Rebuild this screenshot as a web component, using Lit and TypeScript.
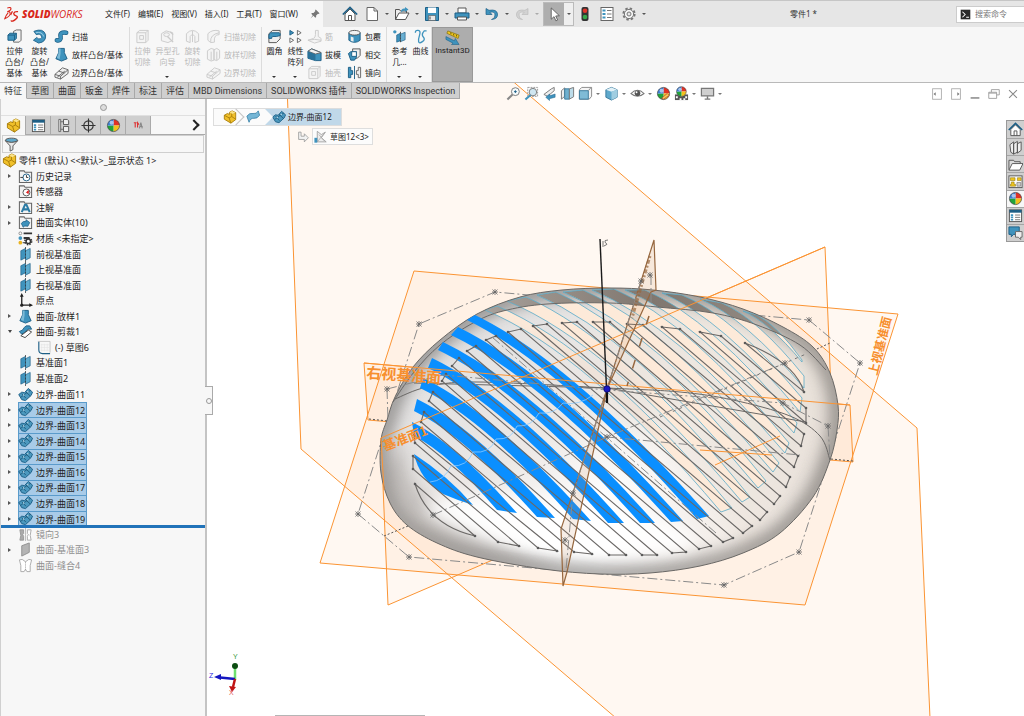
import { LitElement, html, svg, css, TemplateResult, SVGTemplateResult } from "lit";
import { customElement, state } from "lit/decorators.js";
import { classMap } from "lit/directives/class-map.js";

type Pt = [number, number];

const steel = "#3f93bd";
const deep = "#1d5f86";

const sphere = svg`
  <circle cx="8" cy="8" r="6.5" fill="#fff"/>
  <path d="M8 8V1.500A6.500 6.500 0 0 1 14.500 8Z" fill="#e03226"/>
  <path d="M8 8H14.500A6.500 6.500 0 0 1 8 14.500Z" fill="#f3c21c"/>
  <path d="M8 8V14.500A6.500 6.500 0 0 1 1.500 8Z" fill="#22a43a"/>
  <path d="M8 8H1.500A6.500 6.500 0 0 1 8 1.500Z" fill="#3c7fd6"/>
  <circle cx="6" cy="5" r="2.200" fill="#fff" opacity=".55"/>
  <circle cx="8" cy="8" r="6.500" fill="none" stroke="#3a3a3a" stroke-width=".7"/>`;

const folder = svg`<path d="M1.500 3.500V2h5l1 1.500h7v11h-13Z" fill="#f2f2f2" stroke="#666" stroke-width="1.100"/>`;

const ICONS: Record<string, SVGTemplateResult> = {
  home: svg`<path d="M3 8v6.500h10V8L8 3Z" fill="#fff" stroke="#555"/><path d="M.8 8.500 8 1.500l7.200 7" fill="none" stroke="${deep}" stroke-width="1.700"/><path d="M6.500 14.500V9.500h3v5" fill="none" stroke="#555"/>`,
  doc: svg`<path d="M3 1.500h7l3.500 3.500v9.500H3Z" fill="#fff" stroke="#666"/><path d="M10 1.500V5h3.500" fill="none" stroke="#666"/>`,
  open: svg`<path d="M1.500 13.500v-10h4l1 1.500h6v2" fill="#eee" stroke="#555"/><path d="M1.500 13.500 5 7h10l-3.500 6.500Z" fill="#fff" stroke="#555"/><path d="M7 6.500q0-4.500 4-4V1l3.500 2.500L11 6V4.500q-2.500 0-4 2Z" fill="${steel}"/>`,
  save: svg`<path d="M1.500 1.500h13v13h-13Z" fill="${steel}" stroke="${deep}"/><path d="M4 1.500h8v5.500H4Z" fill="#fff"/><path d="M4.500 9.500h7v5h-7Z" fill="#e8e8e8" stroke="#555" stroke-width=".6"/><path d="M6 10.500v3" stroke="#444"/>`,
  print: svg`<path d="M4 2h8v5H4Z" fill="#fff" stroke="#555"/><path d="M1 7h14v5H1Z" fill="${steel}" stroke="${deep}"/><path d="M3.500 11h9v3h-9Z" fill="#fff" stroke="#555"/>`,
  undo: svg`<path d="M2 2.500v6h6L5.800 6.300Q11 5 11 9t-3.500 4.500Q14 13 13.500 8T5 4.300Z" fill="${steel}" stroke="${deep}" stroke-width=".7"/>`,
  redo: svg`<path d="M14 2.500v6H8l2.200-2.200Q5 5 5 9t3.500 4.500Q2 13 2.500 8T11 4.300Z" fill="#d2d2d2" stroke="#bcbcbc" stroke-width=".7"/>`,
  cursor: svg`<path d="M4.500 1v12l3-2.700 2 4.500 1.800-.9-2-4.300 3.900-.3Z" fill="#fff" stroke="#555" stroke-width=".9"/>`,
  lights: svg`<rect x="4.500" y="1" width="7" height="14" rx="2" fill="#333"/><circle cx="8" cy="4.700" r="2.300" fill="#e0352b"/><circle cx="8" cy="11" r="2.300" fill="#37a84a"/>`,
  options: svg`<rect x="2" y="1.500" width="12" height="13" fill="#fff" stroke="#666"/><path d="M3.500 4.500h3M3.500 8h3M3.500 11.500h3" stroke="${steel}" stroke-width="2"/><path d="M8 4.500h4.500M8 8h4.500M8 11.500h4.500" stroke="#777"/>`,
  gear: svg`<circle cx="8" cy="8" r="5.600" fill="none" stroke="#777" stroke-width="2" stroke-dasharray="2.400 2"/><circle cx="8" cy="8" r="4.600" fill="#f5f5f5" stroke="#777"/><circle cx="8" cy="8" r="2" fill="#e6e6e6" stroke="#777"/>`,
  pin: svg`<path d="m9 2 5 5-1 1-1-.4L9.500 10v2L8.500 13 5.800 10.200 2 14l3-4.500L3 7.500l1-1h2L8.500 4 8 3Z" fill="#777"/>`,
  extrude: svg`<path d="M7 2.500 10 1h5v11l-2 2H7Z" fill="#f0f0f0" stroke="#666"/><path d="M1 6.500 3 4.500h7V10l-2 2H1Z" fill="${steel}" stroke="${deep}"/><path d="M1 6.500h7V12M8 6.500l2-2" fill="none" stroke="${deep}"/>`,
  revolve: svg`<path d="M2 2.500Q12-1.500 14.500 6 15.500 14 7 15L1.500 12 5 9q1.500 2 4 1.500 2-1 1-3Q9 4.500 4.500 6Z" fill="${steel}" stroke="${deep}" stroke-width=".9"/><path d="M4 4q7-1.500 8.500 4" fill="none" stroke="#a5d3e8"/>`,
  sweep: svg`<path d="M3 12q5 1 4-4t6-4" fill="none" stroke="${deep}" stroke-width="4.800" stroke-linecap="round"/><path d="M3 12q5 1 4-4t6-4" fill="none" stroke="${steel}" stroke-width="3.200" stroke-linecap="round"/>`,
  loft: svg`<path d="M5 1.500h6V6l3 6.500-6 2.500-6-2.500L5 6Z" fill="${steel}" stroke="${deep}"/><path d="M5 1.500h2V7l-1 6-3-1.500L5 6Z" fill="#7dbbd8"/>`,
  bound: svg`<path d="M1 10 9 3l6 2v4l-8 6-6-2Z" fill="#eee" stroke="#666"/><path d="m1 10 6 2 8-7M7 12v3M5 6.500l6 2M3.500 13l8-6.500" fill="none" stroke="#666"/>`,
  cutBox: svg`<path d="M2 4 5 1.500h9V12l-2.500 2.500H2Z" fill="#eee" stroke="#666"/><path d="M2 4h9.500v10.500M11.500 4 14 1.500M5 7h4v4H5Z" fill="none" stroke="#666"/>`,
  loftCut: svg`<path d="m1.500 4 4-2.500 3 1V14l-3 1-4-2ZM8.500 3l3-1.500 3 2V12l-3 2.500-3-1Z" fill="#eee" stroke="#666"/><path d="M5.500 5v9.500M11.500 5v9" stroke="#666"/>`,
  hole: svg`<path d="m1.500 5 5-3 7 2v8l-5 2.500-7-2Z" fill="#eee" stroke="#666"/><ellipse cx="7" cy="6" rx="3" ry="2" fill="none" stroke="#666"/><path d="m8 8 6 6M11 3l3 3" stroke="#666" stroke-width="1.500"/>`,
  revCut: svg`<path d="M1.500 5Q8-2 14.500 5v8l-4 1.500V8Q8 4 5.500 8v6.500l-4-1.500Z" fill="#eee" stroke="#666"/><path d="M8 2v12" stroke="#666"/>`,
  sweepCut: svg`<path d="M2 5q5-5 12-3v4q-6 0-5 8l-4 .5L2 12Z" fill="#eee" stroke="#666"/><path d="M5 14Q4 6 14 4" fill="none" stroke="#666"/>`,
  fillet: svg`<path d="M2 5 6 1.500h8v9L10 14.500H2Z" fill="#eee" stroke="#555"/><path d="M2 7q0-2 2-3h9l1 1v2l-4 1H6Q5 8 5 10H2Z" fill="${steel}" stroke="${deep}"/>`,
  pattern: svg`<path d="M2 1.500 6 4 2 6.500Z" fill="${steel}" stroke="${deep}"/><path d="M10 1.500 14 4l-4 2.500ZM2 9.500 6 12l-4 2.500ZM10 9.500l4 2.500-4 2.500Z" fill="#fff" stroke="#666"/>`,
  rib: svg`<path d="M9 1.500h3V8l3 2v3l-7 2-7-3 6-2q2-1 2-4Z" fill="#eee" stroke="#666"/><path d="m1 12 7-1 7 1" fill="none" stroke="#666"/>`,
  draft: svg`<path d="M1 4.500 5 2l10 4v8.500H9L1 12Z" fill="${steel}" stroke="${deep}"/><path d="M1 4.500 5 2l10 4-6 1.500Z" fill="#f2f2f2" stroke="#666"/><path d="M1 4.500 9 8v6.500L1 12Z" fill="#2a7199"/>`,
  wrap: svg`<path d="M2 4v8q6 4.500 12 0V4Z" fill="${steel}" stroke="${deep}"/><ellipse cx="8" cy="4" rx="6" ry="2.500" fill="#f2f2f2" stroke="#555"/><path d="M4 8v4.500l3 1V9Z" fill="#eee"/>`,
  intersect: svg`<path d="M6 2h8v7l-3 3H6Z" fill="#eee" stroke="#555"/><path d="M1.500 7 4 5h6v6l-2 3H4Z" fill="${steel}" stroke="${deep}"/><path d="M5 5h5v5H5Z" fill="#fff" stroke="${deep}"/>`,
  mirror: svg`<path d="M1.500 2.500H4V6h2v4H4v3.500H1.500Z" fill="${steel}" stroke="${deep}"/><path d="M14.500 2.500H12V6h-2v4h2v3.500h2.500Z" fill="#eee" stroke="#666"/><path d="M8 1v14" stroke="${deep}"/>`,
  refgeo: svg`<circle cx="3" cy="3" r="1.800" fill="${steel}"/><path d="M5 6.500 9 4.500v8L5 14Z" fill="${steel}" stroke="${deep}" stroke-width=".7"/><path d="m9 5.500 5-2v8l-5 2Z" fill="#6bb0d2" stroke="${deep}" stroke-width=".7"/><path d="M9 3v12" stroke="#444" stroke-dasharray="2 1"/>`,
  curve: svg`<path d="M2.500 4q0-3 3-2.500t1.500 5-1 7 4 0 1-5 1-6.500h2.500" fill="none" stroke="${steel}" stroke-width="1.400"/>`,
  instant: svg`<path d="m2 3.500 1-2.500 12 4.500-1 3.500Z" fill="#f2c81e" stroke="#8a7410" stroke-width=".8"/><path d="m6 2.500.5 2M9 4l.5 2M12 5l.5 2" stroke="#6b5a0a"/><path d="m1 7 9 4.500L11 9l4 6.500H7L8.500 14 1 10Z" fill="${steel}" stroke="${deep}" stroke-width=".6"/>`,
  part: svg`<path d="M1.500 6 5 4l2.500 1V2.500l3-1.500 4 2v8L9 15l-7.500-4.500Z" fill="#f0c02a" stroke="#a87d0a"/><path d="m1.500 6 5.500 3 3-1.500V4l4.500-1M7 9l2 6M10 7.500l4.500 3" fill="none" stroke="#a87d0a"/><path d="M7.500 2.500 10.500 1l4 2L11 4.500Z" fill="#fbe38a"/>`,
  props: svg`<rect x="1.500" y="2" width="13" height="12.500" fill="#fff" stroke="#555"/><path d="M1.500 2h13v3h-13Z" fill="${deep}"/><path d="M3 7.500h2.500M3 10h2.500M3 12.500h2.500" stroke="${steel}" stroke-width="1.800"/><path d="M7.500 7.500H13M7.500 10H13M7.500 12.500H13" stroke="#777"/>`,
  config: svg`<path d="M3 1.500h2v13H3ZM5 4h3M5 12h3" fill="#eee" stroke="#666"/><path d="M8 1.500h4l1.500 1.500v4H8ZM8 9h5.500v5.500H8Z" fill="#eee" stroke="#555"/>`,
  target: svg`<circle cx="8" cy="8" r="5" fill="none" stroke="#333" stroke-width="1.200"/><path d="M8 .5v15M.5 8h15" stroke="#333" stroke-width="1.200"/>`,
  sphere,
  cam: svg`<path d="M3 5h3M4.500 5v5M7 10V5l1.500 2" fill="none" stroke="#d33" stroke-width="1.200"/><path d="M9 11l1.500-6L12 11M9.500 9h3" fill="none" stroke="#888" stroke-width="1.200"/>`,
  filter: svg`<ellipse cx="8" cy="3.500" rx="6.500" ry="2.300" fill="#5fa9cc" stroke="#555"/><path d="m1.500 4 5 5.500v5.500l3-1.500v-4l5-5.500Q8 7.500 1.500 4Z" fill="#e9e9e9" stroke="#555"/>`,
  history: svg`${folder}<circle cx="9" cy="9" r="3.700" fill="#fff" stroke="${deep}"/><path d="M9 6.500V9h2M2.500 9h3" stroke="#333" fill="none"/>`,
  sensor: svg`${folder}<circle cx="9" cy="9" r="3.700" fill="#fff" stroke="#555"/><path d="m9 9 2-2v3Z" fill="#d22" stroke="#d22"/>`,
  note: svg`${folder}<path d="M4 13 7.500 5h1.500L12.500 13M5.500 10h5.500" fill="none" stroke="#2b7ba5" stroke-width="2.200"/>`,
  bodies: svg`${folder}<path d="M3.500 9q2-3 5-2V5l4 3-2 4q-4-1-5 1Z" fill="${steel}" stroke="${deep}" stroke-width=".8"/>`,
  material: svg`<circle cx="2.500" cy="2.500" r="1.500" fill="#fff" stroke="#666" stroke-width=".7"/><circle cx="2.500" cy="7.500" r="2" fill="${steel}"/><circle cx="2.500" cy="12.500" r="2" fill="#e9b320"/><path d="M6 2.500h9M6 7.500h6" stroke="#333" stroke-width="2"/><circle cx="11" cy="11" r="3.600" fill="none" stroke="#333" stroke-width="1.600" stroke-dasharray="1.600 1.200"/><circle cx="11" cy="11" r="2.400" fill="#fff" stroke="#333" stroke-width="1.600"/><path d="M5 12.500h3" stroke="#333"/>`,
  plane: svg`<path d="m3 4 5-2.500v10L3 14Z" fill="${steel}" stroke="${deep}" stroke-width=".7"/><path d="m8 4 5-2.500v10L8 14Z" fill="#5faccf" stroke="${deep}" stroke-width=".7"/><path d="M8 0v16" stroke="#333" stroke-width=".8" stroke-dasharray="2 1.500"/>`,
  origin: svg`<path d="M4 2v11h10" fill="none" stroke="#222" stroke-width="1.400"/><path d="m4 0 2 4H2ZM16 13l-4-2v4Z" fill="#222"/><circle cx="4" cy="13" r="1.700" fill="#222"/>`,
  trim: svg`<path d="M1.500 8q4-1 5-4t6-2l2 3.500q-4-1-6 2t-5 3Z" fill="${steel}" stroke="${deep}"/><path d="m3 12.500 8-6 3.500 2-7 6Z" fill="#fff" stroke="#444"/>`,
  sketch: svg`<path d="M3 1.500v9q0 4 4 4h8" fill="none" stroke="${deep}" stroke-width="1.200"/><path d="M2 1.500h13v12" fill="none" stroke="#bbb" stroke-width=".8"/><path d="M6 4v8M9 4v8M12 4v8M5 5h9M5 8h9M5 11h9" stroke="#e2e2e2" stroke-width=".6"/>`,
  surf: svg`<path d="M.8 8 4 5.500 7 6l4-4.500 4.500 4L14 9l-6 5.500-4-1Z" fill="#4b98be" stroke="${deep}"/><path d="m4 7 4.500 5M8 5l5 4.500M3 11l7-5.500 3.500-2" fill="none" stroke="#174e6e" stroke-width=".8"/><circle cx="6" cy="8.500" r=".8" fill="#cfe8f4"/><circle cx="10.500" cy="5" r=".8" fill="#cfe8f4"/>`,
  mirrorOff: svg`<path d="M2 3h4v4l-1 1 1 2v4H2l1-5Z" fill="#aaa" stroke="#999"/><path d="M14 3h-4v4l1 1-1 2v4h4l-1-5Z" fill="#fff" stroke="#aaa"/><path d="M8 1v14" stroke="#bbb"/>`,
  planeOff: svg`<path d="m4 4 8-3v10l-8 4Z" fill="#b4b4b4" stroke="#8f8f8f"/>`,
  knit: svg`<path d="m1.500 2 3-.5L8 4l3.500-2.500 3 .5L13 8v6.500H9.500L8 12l-1.500 2.500H3V8Z" fill="#fff" stroke="#aaa"/><path d="M8 4v9" stroke="#999" stroke-dasharray="1 1"/>`,
  zoomFit: svg`<circle cx="10" cy="6" r="4.200" fill="#f5fafc" stroke="#777"/><path d="m7 9-5.500 5.500" stroke="#888" stroke-width="2.200"/><path d="M8.500 6h3M10 4.500v3" stroke="${deep}"/>`,
  zoomArea: svg`<path d="M4 1.500h10.500V11H4Z" fill="none" stroke="#999" stroke-dasharray="2 1"/><circle cx="9.500" cy="6.500" r="4" fill="#cfe6f1" stroke="#777"/><path d="m7 9.500-5.500 5" stroke="${steel}" stroke-width="2.200"/>`,
  prev: svg`<path d="m2 9 8-6 3-1.500V5L6 11Z" fill="#eee" stroke="#777"/><path d="m4 12 4-3.500v2l6-2V12l-6 1.500v2Z" fill="${steel}" stroke="${deep}" stroke-width=".5"/>`,
  section: svg`<path d="M1.500 5 5 2v9l-3.500 3Z" fill="#eee" stroke="#777"/><path d="M5 3h5v11H5Z" fill="#6fb0cf" stroke="#3a7a9c"/><path d="m10 3 4.500-1.500v10L10 14Z" fill="#bcdcea" stroke="#777"/>`,
  orient: svg`<path d="M4 1.500h10.500V11L12 14H1.500V4Z" fill="#f5f5f5" stroke="#888"/><path d="M1.500 5H11v9H1.500Z" fill="#7fbbd6" stroke="#3a7a9c"/><path d="M11 5l3-3.500" stroke="#888"/>`,
  style: svg`<path d="m2 4 6-2.500L14 4v8l-6 3-6-3Z" fill="#5fa9cc" stroke="#3a7a9c"/><path d="m2 4 6-2.500L14 4 8 6Z" fill="#e2f1f7"/><path d="M8 6v9l6-3V4Z" fill="#9fcde1"/>`,
  eye: svg`<path d="M1 8q7-7 14 0-7 6-14 0Z" fill="#fff" stroke="#777" stroke-width="1.100"/><circle cx="8" cy="7.700" r="3" fill="#555"/><circle cx="7" cy="6.700" r="1" fill="#fff"/>`,
  appear: svg`${sphere}<path d="m6 13 6-5 2 2-6 4Z" fill="#f3d35a" stroke="#b33" stroke-width=".7"/>`,
  scene: svg`<path d="M1 9h14v6H1Z" fill="#555"/><path d="M2 11h2v2H2ZM6 13h2v2H6ZM12 11h2v2h-2ZM10 13h2v2h-2Z" fill="#fff"/><g transform="translate(1.500 -.5) scale(.8)">${sphere}</g>`,
  monitor: svg`<path d="M1.500 2.500h13v8h-13Z" fill="#cfcfcf" stroke="#777" stroke-width="1.300"/><path d="M8 11v3M5 14h6" stroke="#777" stroke-width="1.500"/>`,
  dockL: svg`<rect x="3" y="2" width="10" height="12" fill="#fff" stroke="#aaa"/><path d="M6.500 6v4L4 8Z" fill="#777"/>`,
  dockR: svg`<rect x="3" y="2" width="10" height="12" fill="#fff" stroke="#aaa"/><path d="M9.500 6v4L12 8Z" fill="#777"/>`,
  min: svg`<path d="M3 12.500h10" stroke="#999" stroke-width="2"/>`,
  restore: svg`<path d="M5 6V3h9v6h-3M2 6h9v7H2Z" fill="none" stroke="#999"/><path d="M2 7h9" stroke="#999"/>`,
  close: svg`<path d="m3.500 3.500 9 9M12.500 3.500l-9 9" stroke="#888" stroke-width="1.200"/>`,
  library: svg`<path d="m2 5 4-3v9.500L6 15l-3-2ZM6 4l4-2.500V13l-4 2ZM10 4l4-2v9l-4 3Z" fill="#eee" stroke="#555"/>`,
  folderBig: svg`<path d="M1 13.500v-10h5l1 1.500h6v2" fill="#ddd" stroke="#555"/><path d="m1 14 3.500-7H16l-3.500 7Z" fill="#fff" stroke="#555"/>`,
  palette: svg`<rect x="1" y="2" width="14" height="12.500" fill="#fff" stroke="#555"/><path d="M2.500 4h5v3h-5ZM10 4h4v3h-4ZM3.500 8.500h3V11H8v2H2.500v-2h1Z" fill="#f0c51c" stroke="#8a7410" stroke-width=".6"/><path d="M9.500 9h4v4h-4Z" fill="#ccc" stroke="#666" stroke-width=".6"/>`,
  forum: svg`<path d="M1 2h11v8H6l-2.500 2.500V10H1Z" fill="${steel}" stroke="${deep}"/><path d="M8 7h7v6h-1.500v2.500L11 13H8Z" fill="#eee" stroke="#666"/>`,
  prompt: svg`<rect x="1" y="1" width="14" height="14" fill="#2a2a2a"/><path d="m3.500 4 4 4-4 4M9 12h4" fill="none" stroke="#fff" stroke-width="1.500"/>`,
  child: svg`<path d="M2 2h3v5h4V4l5 5-5 5v-3H2Z" fill="#f2f2f2" stroke="#999"/>`,
  patch: svg`<path d="M1 7q3-4 7-3t6-3l1.500 5Q13 10 9 9.500T3.500 14Z" fill="#74b6d6" stroke="#3f86ab"/>`,
  sketchSurf: svg`<path d="M4 1v13h11L9 9l5-7-5 3Z" fill="#eee" stroke="#999"/><path d="M4 14 13 3M6 5l7 8" stroke="#aaa"/><path d="M.5 9H4v6H.5Z" fill="${steel}"/>`,
};

const icon = (name: string): TemplateResult =>
  html`<svg class="icon" viewBox="0 0 16 16" aria-hidden="true">${ICONS[name]}</svg>`;

const iconCss = css`
  .icon { width: 15px; height: 15px; flex: none; display: block; }
  button { font: inherit; color: inherit; background: none; border: 0; padding: 0; margin: 0; }
  * { box-sizing: border-box; }
`;

/* ---------- title bar ---------- */

@customElement("title-bar")
class TitleBar extends LitElement {
  static styles = [iconCss, css`
    :host { display: flex; height: 27px; background: #e6e6e6; border-top: 1px solid #c6c6c6; align-items: stretch; font-size: 8px; line-height: 12px; color: #222; }
    .brand { display: flex; align-items: center; width: 323px; background: #f7f7f7; padding-left: 4px; }
    .mark { width: 15px; height: 16px; }
    .name { margin-left: 3px; font: italic 800 10px/12px "Open Sans", sans-serif; color: #d9271c; width: 83px; white-space: nowrap; }
    .name span { font-weight: 400; }
    nav { display: flex; gap: 8px; flex: 1; }
    nav button { white-space: nowrap; }
    .pin { margin-right: 2px; }
    .pin .icon { width: 12px; height: 12px; }
    .quick { display: flex; align-items: center; padding-left: 19px; }
    .cell { display: flex; align-items: center; width: 30px; }
    .cell.solo { width: 22px; }
    .cell .icon { width: 16px; height: 16px; }
    .drop { width: 14px; display: grid; place-items: center; }
    .drop::before { content: ""; border: 2px solid transparent; border-top-color: #555; border-bottom: 0; }
    .faded .drop::before { border-top-color: #aaa; }
    .select { display: flex; align-self: stretch; margin: 1px 3px 1px -1px; border: 1px solid #bbb; }
    .select .hot { width: 20px; background: #aeaeae; display: grid; place-items: center; }
    .select .drop { width: 9px; background: #efefef; }
    .title { flex: 1; text-align: center; align-self: center; color: #333; }
    .search { display: flex; align-items: center; gap: 4px; background: #fff; border: 1px solid #ccc; border-right: 0; align-self: center; height: 17px; width: 68px; padding-left: 3px; }
    .search .icon { width: 11px; height: 11px; }
    .search input { width: 48px; border: 0; padding: 0; outline: 0; font: inherit; background: none; }
    .search input::placeholder { color: #777; }
  `];
  render() {
    const menus = ["文件(F)", "编辑(E)", "视图(V)", "插入(I)", "工具(T)", "窗口(W)"];
    const drops = ["doc", "open", "save", "print", "undo", "redo"];
    return html`
      <div class="brand">
        <svg class="mark" viewBox="0 0 16 16" aria-hidden="true">
          <path d="M3.500 1.500q4-1 4 .8T3.500 5.500q3.500-.5 3 2.500T.8 13q1.500-4 3.700-6.500" fill="none" stroke="#d9271c" stroke-width="1.100"/>
          <path d="M15 5.500q-4-.5-4.500 1.500t2.500 3-1 4-4.500.8M9 5 7 9" fill="none" stroke="#d9271c" stroke-width="1.400"/>
        </svg>
        <div class="name">SOLID<span>WORKS</span></div>
        <nav>${menus.map((m) => html`<button>${m}</button>`)}</nav>
        <button class="pin" aria-label="固定">${icon("pin")}</button>
      </div>
      <div class="quick">
        <button class="cell solo" aria-label="主页">${icon("home")}</button>
        ${drops.map((d) => html`<button class=${classMap({ cell: true, faded: d === "redo" })} aria-label=${d}>${icon(d)}<span class="drop"></span></button>`)}
        <div class="select"><button class="hot" aria-label="选择">${icon("cursor")}</button><button class="drop" aria-label="选择选项"></button></div>
        <button class="cell solo" aria-label="重建">${icon("lights")}</button>
        <button class="cell solo" aria-label="属性">${icon("options")}</button>
        <button class="cell" aria-label="选项">${icon("gear")}<span class="drop"></span></button>
      </div>
      <div class="title">零件1 *</div>
      <label class="search">${icon("prompt")}<input type="text" placeholder="搜索命令" aria-label="搜索命令" /></label>`;
  }
}

/* ---------- command ribbon ---------- */

interface Big { icon: string; lines: string[]; drop?: boolean; off?: boolean }
interface Small { icon: string; text: string; off?: boolean }

@customElement("command-ribbon")
class CommandRibbon extends LitElement {
  static styles = [iconCss, css`
    :host { display: flex; height: 56px; background: #f7f7f7; border-bottom: 1px solid #b9b9b9; font-size: 8px; line-height: 11px; color: #222; }
    .group { display: flex; border-right: 1px solid #dcdcdc; }
    .first { padding-left: 2px; }
    .big { position: relative; width: 25px; display: flex; flex-direction: column; align-items: center; padding-top: 2px; white-space: nowrap; }
    .big .icon { margin-bottom: 1px; }
    .narrow .big { width: 21px; }
    .narrow { padding-left: 2px; }
    .big.drop::after { content: ""; border: 2px solid transparent; border-top-color: #333; border-bottom: 0; margin-top: auto; margin-bottom: 4px; }
    .stack { display: grid; grid-template-rows: repeat(3, 1fr); padding: 0 5px 0 1px; }
    .first .stack { padding-left: 2px; padding-right: 6px; }
    .small { display: flex; align-items: center; gap: 3px; white-space: nowrap; }
    .off { color: #b9b9b9; }
    .off .icon { filter: grayscale(1); opacity: .3; }
    .instant { width: 41px; background: #adadad; border: 1px solid #999; display: flex; flex-direction: column; align-items: center; padding-top: 2px; }
    .instant span { font-family: Roboto, sans-serif; }
  `];
  big = (b: Big) => html`<button class=${classMap({ big: true, drop: !!b.drop, off: !!b.off })}>${icon(b.icon)}${b.lines.map((l) => html`<span>${l}</span>`)}</button>`;
  small = (s: Small) => html`<button class=${classMap({ small: true, off: !!s.off })}>${icon(s.icon)}<span>${s.text}</span></button>`;
  render() {
    return html`
      <div class="group first">
        ${[{ icon: "extrude", lines: ["拉伸", "凸台/", "基体"] }, { icon: "revolve", lines: ["旋转", "凸台/", "基体"] }].map(this.big)}
        <div class="stack">${[{ icon: "sweep", text: "扫描" }, { icon: "loft", text: "放样凸台/基体" }, { icon: "bound", text: "边界凸台/基体" }].map(this.small)}</div>
      </div>
      <div class="group">
        ${[{ icon: "cutBox", lines: ["拉伸", "切除"], off: true }, { icon: "hole", lines: ["异型孔", "向导"], off: true, drop: true }, { icon: "revCut", lines: ["旋转", "切除"], off: true }].map(this.big)}
        <div class="stack">${[{ icon: "sweepCut", text: "扫描切除", off: true }, { icon: "loftCut", text: "放样切除", off: true }, { icon: "bound", text: "边界切除", off: true }].map(this.small)}</div>
      </div>
      <div class="group narrow">
        ${[{ icon: "fillet", lines: ["圆角"], drop: true }, { icon: "pattern", lines: ["线性", "阵列"], drop: true }].map(this.big)}
        <div class="stack">${[{ icon: "rib", text: "筋", off: true }, { icon: "draft", text: "拔模" }, { icon: "cutBox", text: "抽壳", off: true }].map(this.small)}</div>
        <div class="stack">${[{ icon: "wrap", text: "包覆" }, { icon: "intersect", text: "相交" }, { icon: "mirror", text: "镜向" }].map(this.small)}</div>
      </div>
      <div class="group narrow">
        ${[{ icon: "refgeo", lines: ["参考", "几..."], drop: true }, { icon: "curve", lines: ["曲线"], drop: true }].map(this.big)}
      </div>
      <button class="instant">${icon("instant")}<span>Instant3D</span></button>`;
  }
}

/* ---------- feature tree ---------- */

interface Row { icon: string; text: string; arrow?: "right" | "down"; kind?: "root" | "nested"; on?: boolean; off?: boolean; bar?: boolean }

const ROWS: Row[] = [
  { icon: "part", text: "零件1 (默认) <<默认>_显示状态 1>", kind: "root" },
  { icon: "history", text: "历史记录", arrow: "right" },
  { icon: "sensor", text: "传感器" },
  { icon: "note", text: "注解", arrow: "right" },
  { icon: "bodies", text: "曲面实体(10)", arrow: "right" },
  { icon: "material", text: "材质 <未指定>" },
  { icon: "plane", text: "前视基准面" },
  { icon: "plane", text: "上视基准面" },
  { icon: "plane", text: "右视基准面" },
  { icon: "origin", text: "原点" },
  { icon: "loft", text: "曲面-放样1", arrow: "right" },
  { icon: "trim", text: "曲面-剪裁1", arrow: "down" },
  { icon: "sketch", text: "(-) 草图6", kind: "nested" },
  { icon: "plane", text: "基准面1" },
  { icon: "plane", text: "基准面2" },
  { icon: "surf", text: "边界-曲面11", arrow: "right" },
  ...[12, 13, 14, 15, 16, 17, 18, 19].map((n): Row => ({ icon: "surf", text: `边界-曲面${n}`, arrow: "right", on: true })),
  { icon: "mirrorOff", text: "镜向3", off: true, bar: true },
  { icon: "planeOff", text: "曲面-基准面3", arrow: "right", off: true },
  { icon: "knit", text: "曲面-缝合4", off: true },
];

@customElement("feature-panel")
class FeaturePanel extends LitElement {
  static styles = [iconCss, css`
    :host { display: flex; flex-direction: column; position: relative; background: #f7f7f7; border-right: 2px solid #c4c4c4; border-left: 1px solid #d0d0d0; font-size: 9px; line-height: 13px; color: #222; padding-top: 16px; }
    .grip { height: 17px; display: grid; place-items: center; border-bottom: 1px solid #e0e0e0; }
    .grip::before { content: ""; width: 5px; height: 5px; border: 1px solid #999; border-radius: 50%; background: #ddd; }
    .tabs { display: flex; height: 19px; border-bottom: 1px solid #aaa; }
    .tabs button { width: 25px; background: #cfcfcf; border-right: 1px solid #aaa; display: grid; place-items: center; }
    .tabs button.on { background: #f7f7f7; margin-bottom: -1px; }
    .tabs .more { margin-left: auto; width: 18px; background: none; border: 0; }
    .more::before { content: ""; width: 6px; height: 6px; border: solid #222; border-width: 2px 2px 0 0; transform: rotate(45deg); margin-right: 4px; }
    .filter { display: flex; align-items: center; height: 18px; margin: 0 1px; border: 1px solid #cfcfcf; padding-left: 1px; }
    .filter input { flex: 1; border: 0; outline: 0; background: none; font: inherit; min-width: 0; }
    .tree { list-style: none; margin: 0; padding: 0; display: grid; grid-auto-rows: 1fr; height: 420px; }
    .tree li { position: relative; display: flex; align-items: stretch; }
    .exp { width: 17px; display: grid; place-items: center; }
    .exp.right::before { content: ""; border: 2px solid transparent; border-left: 3px solid #555; border-right: 0; }
    .exp.down::before { content: ""; border: 2px solid transparent; border-top: 3px solid #444; border-bottom: 0; }
    .label { display: flex; align-items: center; gap: 3px; padding-right: 1px; white-space: nowrap; }
    .root .label { gap: 2px; }
    .root { padding-left: 1px; }
    .nested { padding-left: 35px; }
    .nested .label { gap: 4px; }
    .on .label { background: #a8cbe8; border: 1px solid #5a9bcb; border-bottom-width: 0; padding-right: 1px; }
    .on .label .icon { margin: -1px 0 0 -1px; }
    .off { color: #8f8f8f; }
    .bar::before { content: ""; position: absolute; left: 0; right: 0; top: -1px; height: 3px; background: #2173b9; }
    .tree .icon { align-self: center; }
    .handle { position: absolute; left: 100%; top: 303px; width: 8px; height: 29px; background: #f7f7f7; border: 1px solid #aaa; border-left: 0; display: grid; place-items: center; z-index: 2; }
    .handle::before { content: ""; width: 4px; height: 4px; border: 1px solid #999; border-radius: 50%; }
  `];
  row(r: Row) {
    const cls = classMap({ on: !!r.on, off: !!r.off, bar: !!r.bar, root: r.kind === "root", nested: r.kind === "nested" });
    return html`<li class=${cls}>
      ${r.kind ? "" : r.arrow ? html`<button class="exp ${r.arrow}" aria-label="展开"></button>` : html`<span class="exp"></span>`}
      <span class="label">${icon(r.icon)}<span>${r.text}</span></span>
    </li>`;
  }
  render() {
    return html`
      <div class="grip"></div>
      <div class="tabs">
        ${["part", "props", "config", "target", "sphere", "cam"].map((t, i) => html`<button class=${i ? "" : "on"} aria-label=${t}>${icon(t)}</button>`)}
        <button class="more" aria-label="更多"></button>
      </div>
      <label class="filter">${icon("filter")}<input type="text" aria-label="过滤" /></label>
      <ul class="tree">${ROWS.map((r) => this.row(r))}</ul>
      <button class="handle" aria-label="折叠面板"></button>`;
  }
}

/* ---------- model scene ---------- */

const pts = (p: Pt[]) => p.map((q) => q.join(",")).join(" ");

/** Smooth path through the points (Catmull-Rom converted to cubic Béziers). */
function spline(p: Pt[], closed = false): string {
  const n = p.length;
  const at = (i: number) => (closed ? p[(i + n) % n] : p[Math.max(0, Math.min(n - 1, i))]);
  let d = `M${p[0]}`;
  for (let i = 0; i < (closed ? n : n - 1); i++) {
    const [a, b, c, e] = [at(i - 1), at(i), at(i + 1), at(i + 2)];
    d += `C${b[0] + (c[0] - a[0]) / 6},${b[1] + (c[1] - a[1]) / 6} ${c[0] - (e[0] - b[0]) / 6},${c[1] - (e[1] - b[1]) / 6} ${c[0]},${c[1]}`;
  }
  return d + (closed ? "Z" : "");
}

/** Curved band: low/high corner at the start, low/high corner at the end. */
function band(a: Pt, b: Pt, c: Pt, d: Pt, bulge: number): string {
  const ctl = (p: Pt, q: Pt): Pt => {
    const [dx, dy] = [q[0] - p[0], q[1] - p[1]];
    return [p[0] + dx * 0.34 + dy * bulge, p[1] + dy * 0.34 - dx * bulge];
  };
  return `M${a}L${b}Q${ctl(b, d)} ${d}L${c}Q${ctl(a, c)} ${a}Z`;
}

const OUTLINE: Pt[] = [
  [610, 288], [653, 290], [700, 297], [743, 309], [783, 327], [813, 347], [830, 373], [838, 405], [837, 430], [830, 460], [813, 497], [780, 533],
  [743, 553], [700, 566], [650, 573], [600, 574], [543, 569], [477, 557], [437, 543], [407, 525], [390, 503], [381, 473], [381, 440], [387, 420],
  [395, 397], [413, 367], [440, 340], [477, 314], [520, 297], [562, 290],
];
const RIM: Pt[] = [[393, 402], [414, 372], [440, 345], [473, 323], [503, 311], [547, 304], [610, 303], [657, 307], [713, 313], [757, 325], [800, 345], [826, 370]];

const BLUE: [Pt, Pt, Pt, Pt][] = [
  [[467, 320], [475, 315], [697, 519], [709, 516]],
  [[451, 335], [458, 327], [671, 522], [683, 521]],
  [[438, 350], [443, 342], [640, 523], [655, 523]],
  [[428, 368], [432, 358], [608, 523], [624, 523]],
  [[420, 388], [423, 378], [573, 519], [591, 521]],
  [[414, 411], [417, 399], [537, 517], [555, 518]],
  [[414, 436], [412, 422], [497, 510], [517, 513]],
];

const HOLES: [Pt, Pt, Pt, Pt][] = [
  [[485, 310], [497, 306], [721, 512], [732, 508]],
  [[507, 301], [526, 297], [742, 502], [750, 497]],
  [[537, 295], [556, 292], [758, 488], [766, 481]],
  [[563, 292], [583, 290], [773, 472], [779, 463]],
  [[592, 290], [614, 289], [785, 453], [789, 443]],
  [[625, 290], [645, 290], [794, 433], [797, 423]],
  [[662, 293], [682, 295], [800, 412], [802, 398]],
  [[700, 299], [722, 303], [804, 388], [804, 376]],
  [[743, 311], [757, 315], [802, 362], [802, 360]],
];

const SLOTS: [Pt, Pt, Pt, Pt][] = [
  [[413, 469], [413, 456], [498, 542], [519, 546]],
  [[415, 443], [414, 435], [538, 548], [557, 551]],
  [[421, 422], [424, 412], [574, 552], [592, 554]],
  [[429, 401], [433, 392], [609, 555], [626, 555]],
  [[442, 381], [446, 374], [642, 555], [657, 555]],
  [[452, 366], [459, 358], [672, 553], [686, 552]],
  [[467, 351], [476, 346], [699, 549], [711, 546]],
  [[486, 340], [496, 336], [723, 542], [733, 538]],
  [[508, 332], [521, 329], [743, 533], [752, 526]],
  [[533, 326], [547, 324], [760, 520], [767, 512]],
  [[562, 323], [577, 322], [774, 504], [780, 496]],
  [[593, 322], [610, 322], [786, 487], [790, 477]],
  [[627, 324], [643, 325], [794, 467], [798, 456]],
  [[662, 327], [680, 329], [801, 446], [804, 434]],
  [[700, 332], [721, 336], [806, 423], [806, 408]],
];

const HULL: Pt[] = [[358, 514], [409, 557], [724, 585], [799, 552], [860, 363], [809, 320], [495, 292], [419, 324]];
const STARS: Pt[] = [...HULL, [387, 389], [828, 426], [650, 275], [641, 281], [565, 540], [573, 493], [607, 437], [433, 515], [785, 363], [783, 403]];

@customElement("model-scene")
class ModelScene extends LitElement {
  static styles = css`
    :host { display: block; }
    svg { display: block; width: 100%; height: 100%; }
    .plane { fill: #ff9a3c; fill-opacity: .065; stroke: none; }
    .edge { fill: none; stroke: #fb9433; stroke-width: 1; }
    .hull { fill: none; stroke: #8a8a8a; stroke-width: 1; stroke-dasharray: 10 3 2 3; }
    .dots { fill: none; stroke: #555; stroke-width: 1; stroke-dasharray: 2 2; }
    .sparse { fill: none; stroke: #777; stroke-width: 1; stroke-dasharray: 3 4; }
    .line { fill: none; stroke: #6a6866; stroke-width: 1; }
    .slot { fill: none; stroke: #6b6866; stroke-width: 1.100; }
    .hole { fill: #fdead9; }
    .lip { fill: none; stroke: #58a9c8; stroke-width: .8; }
    .blue { fill: #0a8fff; }
    .brown { fill: #c98a52; fill-opacity: .14; stroke: #96673f; stroke-width: 1.200; }
    .tag { font-family: "Noto Sans CJK SC", sans-serif; font-weight: 700; fill: #f78f2e; }
    .axis { font: 7px "Liberation Sans", sans-serif; }
  `;
  render() {
    const body = spline(OUTLINE, true);
    const rimFill = spline(RIM) + "L840,340L760,280L540,275L380,360Z";
    const star = ([x, y]: Pt) => svg`<path d="M${x - 3},${y}h6M${x},${y - 3}v6M${x - 2.5},${y - 2.5}l5,5M${x + 2.5},${y - 2.5}l-5,5" stroke="#666" stroke-width=".8"/>`;
    const dot = ([x, y]: Pt) => svg`<circle cx=${x} cy=${y} r="1.300" fill="#5b5b5b"/>`;
    return html`<svg viewBox="207 83 817 633" preserveAspectRatio="xMinYMin slice" role="img" aria-label="模型">
      <defs>
        <clipPath id="body"><path d=${body}/></clipPath>
        <clipPath id="holes">${HOLES.map((h) => svg`<path d=${band(...h, 0.11)}/>`)}</clipPath>
        <filter id="soft" x="-20%" y="-20%" width="140%" height="140%"><feGaussianBlur stdDeviation="8"/></filter>
        <linearGradient id="shell" gradientUnits="userSpaceOnUse" x1="440" y1="330" x2="620" y2="560">
          <stop offset="0" stop-color="#e0e0e1"/><stop offset=".5" stop-color="#ece8e5"/><stop offset=".8" stop-color="#ffffff"/>
        </linearGradient>
        <linearGradient id="warm" gradientUnits="userSpaceOnUse" x1="600" y1="0" x2="838" y2="0">
          <stop offset="0" stop-color="#e6ddd6" stop-opacity="0"/><stop offset=".6" stop-color="#efe7e0"/><stop offset="1" stop-color="#d9d0c8"/>
        </linearGradient>
        <linearGradient id="dark" gradientUnits="userSpaceOnUse" x1="480" y1="0" x2="820" y2="0">
          <stop offset="0" stop-color="#a8a19b"/><stop offset=".5" stop-color="#80776f"/><stop offset="1" stop-color="#9a928b"/>
        </linearGradient>
      </defs>

      <polygon class="plane" points="286,60 301,449 616,718 930,718 917,428 488,60"/>
      <polygon class="plane" points="414,271 898,314 805,605 320,563"/>
      <polygon class="plane" points="381,438 825,247 832,414 388,605"/>
      <polygon class="plane" points="364,363 850,405 853,462 368,420"/>
      <polygon class="edge" points="286,60 301,449 616,718 930,718 917,428 488,60"/>
      <polygon class="edge" points="414,271 898,314 805,605 320,563"/>
      <polygon class="edge" points="381,438 825,247 832,414 388,605"/>
      <polygon class="edge" points="364,363 850,405 853,462 368,420"/>
      <polygon class="hull" points=${pts(HULL)}/>
      <path class="dots" d="M369,419l19,2M831,459l22,2M384,536l24,-10M806,354l24,-11"/>

      <g clip-path="url(#body)">
        <path d=${body} fill="url(#shell)"/>
        <path d=${body} fill="url(#warm)" opacity=".8"/>
        <path d="M600,288L840,288V420L745,555Q720,470 600,400Z" fill="#ece4dd" opacity=".6" filter="url(#soft)"/>
        <path d=${body} fill="none" stroke="#5f5b58" stroke-width="17" opacity=".62" filter="url(#soft)"/>
        <path d="M382,470Q388,505 437,543T560,570Q480,540 440,510T405,440Z" fill="#8f8985" opacity=".4" filter="url(#soft)"/>
        <ellipse cx="560" cy="524" rx="135" ry="24" fill="#fff" filter="url(#soft)" opacity=".9" transform="rotate(7 560 524)"/>
      </g>

      ${HOLES.map((h) => svg`<path class="hole" d=${band(...h, 0.11)}/>`)}
      <g clip-path="url(#holes)"><g clip-path="url(#body)">
        <path d=${rimFill} fill="url(#dark)"/>
        <path d="M480,320L640,370L680,560L480,560Z" fill="#e4deda" opacity=".6" filter="url(#soft)"/>
      </g></g>
      <g clip-path="url(#body)">${HOLES.map((h) => svg`<path class="lip" d=${band(...h, 0.11)}/>`)}</g>

      <path class="line" d=${spline(RIM)}/>
      <path class="line" d=${body}/>
      <path class="line" d=${spline([[395, 399], [427, 387], [477, 382], [607, 388], [680, 392], [733, 400], [790, 416], [820, 436], [830, 460]])}/>
      <path class="line" d="M607,388L806,422M414,383L607,388"/>

      ${BLUE.map((b) => svg`<path class="blue" d=${band(...b, 0.09)}/>`)}
      <path class="blue" d="M414,454Q448,476 473,505L458,500L443,494Q420,480 414,454Z"/>

      ${SLOTS.map(([a, b, c, d]) => svg`<path class="slot" d="M${a}L${b}L${d}L${c}Z"/>${[a, b, c, d].map(dot)}`)}
      <path class="slot" d="M415,484L475,536Q428,525 415,484Z"/>
      <path class="slot" d="M745,343L804,392Q795,362 745,343Z"/>
      ${([[415, 484], [475, 536], [745, 343], [804, 392]] as Pt[]).map(dot)}
      <path d="M430,482q14,-1 21,-16 16,1 22,-14 17,2 23,-13 16,1 21,-13 15,1 22,-13 15,2 24,-10 16,3 30,-8" fill="none" stroke="#8ccaff" stroke-width="1" opacity=".8"/>

      <path class="hull" d="M433,515L607,437L785,363M607,437L800,455M387,389L443,375L607,390L783,403L828,426L830,458M387,389L388,420M492,337L716,533"/>
      <path class="sparse" d="M660,417L806,354"/>
      <path class="edge" d="M381,438L825,247M364,363L850,405M381,438L384,490M715,465L780,436M700,450L772,455"/>

      <path class="brown" d="M654,240L656,290L651,292L607,389L567,572L563,586L561,529L607,389Z"/>
      <path d="M649,316L627,386" stroke="#96673f" stroke-width="1.500" stroke-dasharray="9 14" fill="none"/>
      <path d="M650,256L632,318" stroke="#96673f" stroke-width="3" stroke-dasharray="2 2 4 2" fill="none" opacity=".7"/>
      <path class="hull" d="M651,275V306M641,281L607,389L573,493L566,570"/>
      ${STARS.map(star)}

      <path d="M600,239L607,400" stroke="#1a1a1a" stroke-width="1.400"/>
      <path d="M607,389v14" stroke="#111" stroke-width="2.200"/>
      <path d="M603,241v6M608,240q-4,0-3,2t2,2-3,2" fill="none" stroke="#555" stroke-width=".8"/>
      <circle cx="607" cy="389" r="3.200" fill="#1a18c4" stroke="#0b0a70" stroke-width=".8"/>

      <text class="tag" font-size="15" transform="translate(366 378) rotate(4)">右视基准面</text>
      <text class="tag" font-size="13" transform="translate(385 451) rotate(-21)">基准面1</text>
      <text class="tag" font-size="12" transform="translate(877 376) rotate(-76)">上视基准面</text>

      <path d="M235,680V668" stroke="#6fe06f" stroke-width="2.500"/><circle cx="235" cy="666" r="3" fill="#0c4d12"/>
      <path d="M235,679L220,677.500" stroke="#1416c0" stroke-width="2.500"/><path d="M214,677l7,-3v6Z" fill="#1416c0"/>
      <path d="M235,679L233,687" stroke="#c01414" stroke-width="2.500"/><path d="M229,686l7,1-4,5Z" fill="#c01414"/>
      <text class="axis" x="233" y="659" fill="#3c9c3c">Y</text>
      <text class="axis" x="209" y="678" fill="#2a2ae0">Z</text>
      <text class="axis" x="229" y="695" fill="#e05050">X</text>
      <path d="M275,715.500H425" stroke="#b5b5b5"/>
    </svg>`;
  }
}

/* ---------- task pane ---------- */

@customElement("task-pane")
class TaskPane extends LitElement {
  static styles = [iconCss, css`
    :host { display: grid; grid-auto-rows: 1fr; width: 18px; height: 122px; border: 1px solid #999; border-right: 0; background: #cfcfcf; }
    button { display: grid; place-items: center; }
    button + button { border-top: 1px solid #a5a5a5; }
    button.on { background: #f7f7f7; }
  `];
  render() {
    return html`${["home", "library", "folderBig", "palette", "sphere", "props", "forum"].map((n) => html`<button class=${n === "sphere" ? "on" : ""} aria-label=${n}>${icon(n)}</button>`)}`;
  }
}

/* ---------- application ---------- */

@customElement("app-root")
class AppRoot extends LitElement {
  @state() tab = 0;
  static styles = [iconCss, css`
    :host { display: flex; flex-direction: column; height: 100vh; overflow: hidden; background: #fff; font-family: "Noto Sans", "Noto Sans CJK SC", sans-serif; }
    .work { position: relative; flex: 1; display: grid; grid-template-columns: 207px 1fr; min-height: 0; }
    .tabs { position: absolute; top: 0; left: 0; z-index: 3; display: flex; height: 16px; font-family: Roboto, "Noto Sans CJK SC", sans-serif; font-size: 9px; line-height: 14px; color: #333; }
    .tabs button { padding: 0 4px; background: #cfcfcf; border: solid #a8a8a8; border-width: 0 1px 1px 0; white-space: nowrap; }
    .tabs button.on { background: #f7f7f7; border-bottom-color: #f7f7f7; color: #444; }
    .view { position: relative; min-width: 0; overflow: hidden; }
    .scene { position: absolute; inset: 0; }
    .heads { position: absolute; top: 3px; left: 299px; display: flex; gap: 3px; }
    .heads button { display: flex; align-items: center; }
    .heads .more::after { content: ""; border: 2px solid transparent; border-top-color: #777; border-bottom: 0; margin: 0 1px 0 3px; }
    .windows { position: absolute; top: 4px; right: 4px; display: flex; gap: 5px; }
    .windows .icon { width: 14px; height: 14px; }
    .pane { position: absolute; top: 37px; right: 0; }
    .crumbs { position: absolute; top: 25px; left: 6px; font-size: 8px; line-height: 12px; color: #222; }
    .path { display: flex; height: 18px; width: 129px; background: #fbfbfb; border: 1px solid #ddd; align-items: center; }
    .path .icon, .sub .icon { width: 14px; height: 14px; }
    .path button { display: flex; align-items: center; height: 16px; }
    .one { position: relative; padding-left: 9px; width: 32px; }
    .one::after { content: ""; position: absolute; right: 4px; top: 2px; width: 11px; height: 11px; border: solid #c4c4c4; border-width: 1px 1px 0 0; transform: rotate(45deg); }
    .two { width: 19px; }
    .three { flex: 1; gap: 2px; padding-left: 7px; background: #c0d8e9; clip-path: polygon(0 0, 100% 0, 100% 100%, 0 100%, 8px 50%); }
    .sub { display: flex; align-items: center; gap: 2px; padding-left: 84px; margin-top: 2px; }
    .sub .icon { width: 13px; }
    .sub button { display: flex; align-items: center; gap: 3px; height: 17px; padding: 0 3px 0 1px; background: #fcfcfc; border: 1px solid #dedede; }
  `];
  render() {
    const tabs = ["特征", "草图", "曲面", "钣金", "焊件", "标注", "评估", "MBD Dimensions", "SOLIDWORKS 插件", "SOLIDWORKS Inspection"];
    const heads: [string, boolean][] = [["zoomFit", false], ["zoomArea", false], ["prev", false], ["section", false], ["orient", true], ["style", true], ["eye", true], ["appear", false], ["scene", true], ["monitor", true]];
    return html`
      <title-bar></title-bar>
      <command-ribbon></command-ribbon>
      <div class="work">
        <div class="tabs" role="tablist">
          ${tabs.map((t, i) => html`<button role="tab" class=${classMap({ on: i === this.tab })} @click=${() => (this.tab = i)}>${t}</button>`)}
        </div>
        <feature-panel></feature-panel>
        <div class="view">
          <model-scene class="scene"></model-scene>
          <div class="heads">${heads.map(([n, more]) => html`<button class=${more ? "more" : ""} aria-label=${n}>${icon(n)}</button>`)}</div>
          <div class="windows">${["dockL", "dockR", "min", "restore", "close"].map((n) => html`<button aria-label=${n}>${icon(n)}</button>`)}</div>
          <div class="crumbs">
            <div class="path">
              <button class="one" aria-label="零件1">${icon("part")}</button>
              <button class="two" aria-label="曲面">${icon("patch")}</button>
              <button class="three">${icon("surf")}<span>边界-曲面12</span></button>
            </div>
            <div class="sub">${icon("child")}<button>${icon("sketchSurf")}<span>草图12&lt;3&gt;</span></button></div>
          </div>
          <task-pane class="pane"></task-pane>
        </div>
      </div>`;
  }
}
